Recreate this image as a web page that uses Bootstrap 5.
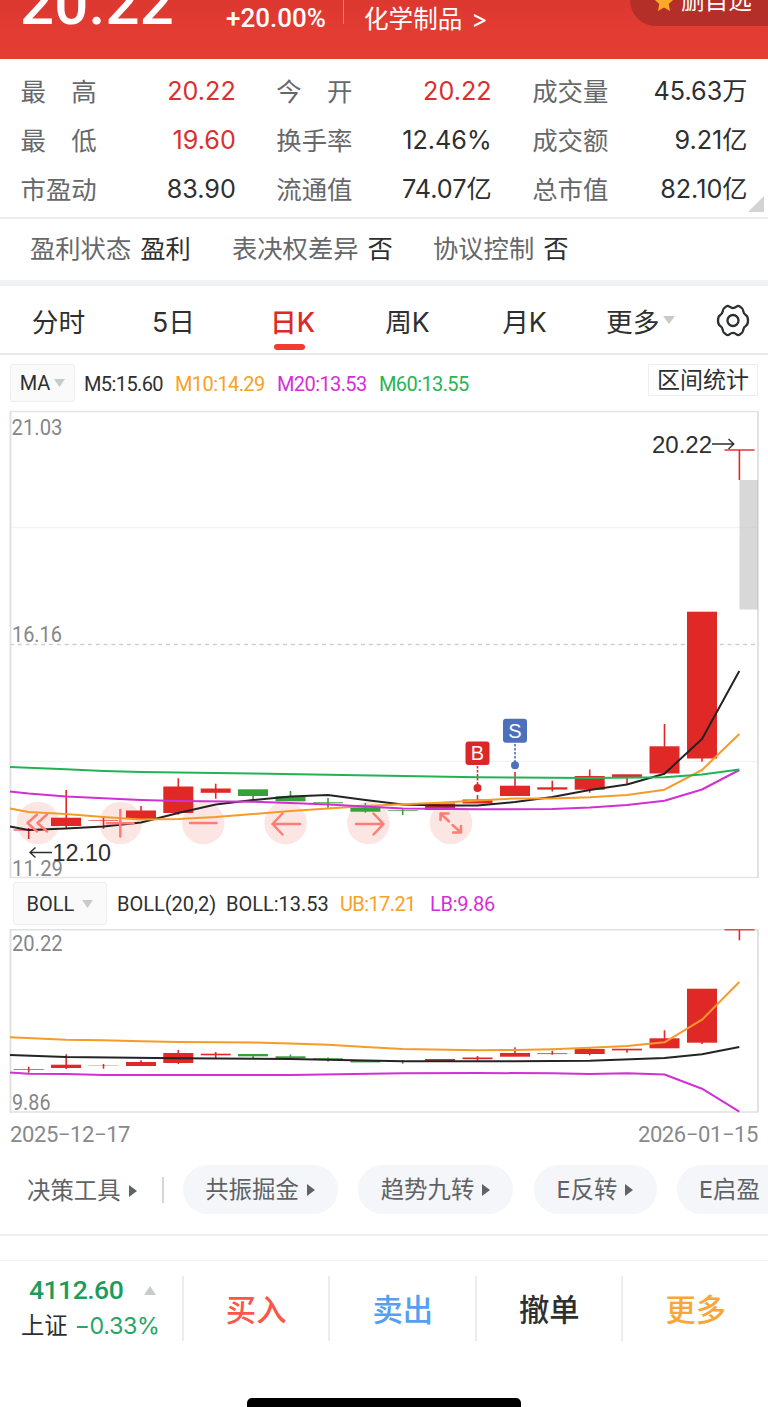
<!DOCTYPE html>
<html lang="zh-CN">
<head>
<meta charset="utf-8">
<meta name="viewport" content="width=device-width, initial-scale=1">
<title>日K 行情</title>
<link href="https://cdn.jsdelivr.net/npm/bootstrap@5.3.0/dist/css/bootstrap.min.css" rel="stylesheet">
<style>
body{width:768px;height:1407px;overflow:hidden;background:#fff;color:#2e2f30;font-family:Inter,"Noto Sans CJK SC",sans-serif;line-height:1}
.din{font-family:Roboto,"Noto Sans CJK SC",sans-serif}
.hero{height:59px;background:linear-gradient(#dc3830,#e33c33 60%,#e43e34);color:#fff}
.hero-price{margin:-26px 0 0 20px;width:206px;font-size:60px;font-weight:500;line-height:60px;letter-spacing:.2px}
.hero-pct{width:117px;font-size:26px;font-weight:500;line-height:37px}
.hero-rule{width:1px;height:24px;background:#ee7a72;margin-right:20px}
.hero-sector{font-size:24.6px;line-height:39px;word-spacing:2px;white-space:pre}
.fav{width:138px;height:52px;margin-top:-26px;border-radius:26px 0 0 26px;background:#b42f28;padding:17px 0 0 23px;font-size:23.6px}
.fav span{margin-top:-2px}
.stats{height:158px;padding:8px 20.5px 0;row-gap:0;column-gap:40.5px;display:grid;grid-template-columns:repeat(3,1fr);grid-auto-rows:49.2px;position:relative;font-size:25.2px}
.stat-name{color:#66686a;font-size:25.4px}
.up{color:#d9302f}
.corner{right:4px;bottom:5px}
.info{height:63px;border-top:2px solid #ececed;padding:0 0 2px 30px;font-size:25.3px;color:#66686a}
.info b{font-weight:400;color:#2e2f30;margin-left:9px}
.band{height:6px;background:#f1f2f5}
.tabs{height:69px;border-bottom:2px solid #e9eaeb;font-size:26.700px}
.tab{width:117px;position:relative;padding-top:5px}
.tab.on{color:#dc2a28;font-weight:500}
.tab.on::after{content:"";position:absolute;left:39.5px;bottom:3px;width:31px;height:6px;border-radius:3px;background:#f13d30}
.legend{height:50px;font-size:20px}
.tight{letter-spacing:-.6px}
.pick{background:#fafafa;border:1px solid #eee;border-radius:3px}
.range{width:110px;height:32px;border:1.5px solid #eee;font-size:23px}
.plot{display:block}
.dates{height:41px;font-size:22px;letter-spacing:-.4px;color:#87898b;padding:0 10px}
.tools{height:81px;padding-top:1px;border-bottom:2px solid #f0f0f1;font-size:23.4px;color:#606365}
.pill{height:49px;border-radius:25px;background:#f4f6fa;flex:none}
.tools-rule{width:1.5px;height:26px;background:#d5d6d7}
.gap-line{height:25px;border-bottom:1.5px solid #f1f1f2}
.bar{height:137px;padding-top:15px}
.idx{width:182px;height:65px}
.act{height:65px;width:146.6px;border-left:2px solid #ececec;font-size:30.3px;font-weight:500;padding-top:3px}
.home{width:274px;height:14px;border-radius:5px;background:#000;margin-left:247px}
</style>
</head>
<body>
<header class="hero d-flex align-items-start overflow-hidden">
  <div class="hero-price din">20.22</div>
  <div class="hero-pct din">+20.00%</div>
  <div class="hero-rule"></div>
  <div class="hero-sector">化学制品 &gt;</div>
  <div class="fav ms-auto d-flex text-nowrap">
    <svg width="22" height="22" viewBox="0 0 22 22" class="flex-shrink-0" style="margin-right:6px"><path d="M11 1l2.9 6.500 7 .8-5.200 4.700 1.400 7L11 16.500 4.900 20l1.400-7L1.100 8.300l7-.8z" fill="#fba928"/></svg><span>删自选</span>
  </div>
</header>

<section class="stats">
  <div class="d-flex justify-content-between align-items-center"><span class="stat-name">最　高</span><span class="up">20.22</span></div>
  <div class="d-flex justify-content-between align-items-center"><span class="stat-name">今　开</span><span class="up">20.22</span></div>
  <div class="d-flex justify-content-between align-items-center"><span class="stat-name">成交量</span><span>45.63万</span></div>
  <div class="d-flex justify-content-between align-items-center"><span class="stat-name">最　低</span><span class="up">19.60</span></div>
  <div class="d-flex justify-content-between align-items-center"><span class="stat-name">换手率</span><span>12.46%</span></div>
  <div class="d-flex justify-content-between align-items-center"><span class="stat-name">成交额</span><span>9.21亿</span></div>
  <div class="d-flex justify-content-between align-items-center"><span class="stat-name">市盈动</span><span>83.90</span></div>
  <div class="d-flex justify-content-between align-items-center"><span class="stat-name">流通值</span><span>74.07亿</span></div>
  <div class="d-flex justify-content-between align-items-center"><span class="stat-name">总市值</span><span>82.10亿</span></div>
  <svg class="corner position-absolute" width="16" height="16"><path d="M16 0V16H0z" fill="#d3d3d3"/></svg>
</section>

<section class="info d-flex align-items-center">
  <span style="width:202px">盈利状态<b>盈利</b></span>
  <span style="width:201px">表决权差异<b>否</b></span>
  <span>协议控制<b>否</b></span>
</section>
<div class="band"></div>

<nav class="tabs d-flex">
  <div class="tab d-flex align-items-center justify-content-center">分时</div>
  <div class="tab d-flex align-items-center justify-content-center pe-1">5日</div>
  <div class="tab on d-flex align-items-center justify-content-center">日K</div>
  <div class="tab d-flex align-items-center justify-content-center pe-1">周K</div>
  <div class="tab d-flex align-items-center justify-content-center pe-1">月K</div>
  <div class="d-flex align-items-center" style="margin-left:21px;padding-top:5px">更多<svg class="ms-1" width="12" height="8" style="margin-top:-4px"><path d="M0 0h12L6 8z" fill="#c9caca"/></svg></div>
  <svg class="ms-auto me-3 mt-3" width="38" height="38" viewBox="0 0 38 38" fill="none" stroke="#2e2f30" stroke-width="2.300" stroke-linejoin="round"><path d="M11.900 4.700C13.500 3.400 14.500 3.700 15.500 4.700C17.500 6.300 20.500 6.300 22.500 4.700C23.500 3.700 24.500 3.400 26.100 4.700C29 6.500 29 7 29.200 9C29.600 11.300 30.500 12.500 32 13.200C33.500 14.200 34 15 34 18.500C34 22 33.500 22.800 32 23.800C30.500 24.500 29.600 25.700 29.200 28C29 30 29 30.500 26.100 32.300C24.500 33.600 23.500 33.300 22.500 32.300C20.500 30.700 17.500 30.700 15.500 32.300C14.500 33.300 13.500 33.600 11.900 32.300C9 30.500 9 30 8.800 28C8.400 25.700 7.500 24.500 6 23.800C4.500 22.800 4 22 4 18.500C4 15 4.500 14.200 6 13.200C7.500 12.500 8.400 11.300 8.800 9C9 7 9 6.500 11.900 4.700Z"/><circle cx="19" cy="18.500" r="5.500"/></svg>
</nav>

<div class="legend din d-flex align-items-start">
  <div class="pick d-flex align-items-center justify-content-center" style="width:65px;height:38px;margin:9px 9px 0 10px">MA<svg class="ms-1" width="11" height="8"><path d="M0 0h11L5.500 8z" fill="#c9caca"/></svg></div>
  <div class="tight d-flex align-items-center" style="height:58px">
    <span style="width:91px">M5:15.60</span>
    <span style="width:102px;color:#f7a125">M10:14.29</span>
    <span style="width:102px;color:#d52fd8">M20:13.53</span>
    <span style="color:#27b455">M60:13.55</span>
  </div>
  <div class="range d-flex align-items-center justify-content-center ms-auto" style="margin:9px 10px 0 0">区间统计</div>
</div>

<svg class="plot" width="768" height="474" viewBox="0 405 768 474">
  <g fill="none">
    <path d="M10 527.500H758M10 761.500H758" stroke="#f3f3f4" stroke-width="1.500"/>
    <path d="M10 644.500H758" stroke="#cfcfcf" stroke-width="1.500" stroke-dasharray="4 3.800"/>
    <path d="M10 411.500H758M10 877.500H758" stroke="#e3e4e5" stroke-width="1.300"/>
    <path d="M10.500 411V878M758 411V878" stroke="#dedfe0" stroke-width="1.800"/>
  </g>
  <rect x="739.500" y="480" width="18.500" height="129.500" fill="#bbb" fill-opacity=".57"/>
  <g fill="#fbe6e4"><circle cx="38" cy="823" r="21.300"/><circle cx="120.500" cy="823" r="21.300"/><circle cx="203.300" cy="823" r="21.300"/><circle cx="285.600" cy="823" r="21.300"/><circle cx="368.400" cy="823" r="21.300"/><circle cx="451" cy="823" r="21.300"/></g>
  <g fill="#e02827">
    <rect x="13.600" y="829.500" width="30" height="1"/><rect x="27.900" y="828" width="1.600" height="11"/>
    <rect x="51" y="817.700" width="30" height="8.300"/><rect x="65.400" y="790" width="1.600" height="38.700"/>
    <rect x="88.500" y="820" width="30" height=".6"/><rect x="102.700" y="816.500" width="1.600" height="12.300"/>
    <rect x="126" y="810.500" width="30" height="8.500"/><rect x="140.200" y="806" width="1.600" height="6"/>
    <rect x="163.300" y="786.500" width="30" height="26.500"/><rect x="177.500" y="778.300" width="1.600" height="36.300"/>
    <rect x="200.700" y="788.500" width="30" height="4.300"/><rect x="214.900" y="783.700" width="1.600" height="15"/>
    <rect x="425" y="803.500" width="30" height="6.500"/>
    <rect x="462.500" y="799.500" width="30" height="4"/><rect x="476.700" y="795" width="1.600" height="6"/>
    <rect x="500" y="785.700" width="30" height="10.300"/><rect x="514.200" y="772" width="1.600" height="14"/>
    <rect x="537.300" y="787.300" width="30" height="2.300"/><rect x="551.500" y="780.700" width="1.600" height="10.800"/>
    <rect x="574.700" y="776" width="30" height="13.700"/><rect x="588.900" y="769.500" width="1.600" height="23.200"/>
    <rect x="612" y="774.300" width="30" height="3.700"/><rect x="626.200" y="777" width="1.600" height="7"/>
    <rect x="649.500" y="746.300" width="30" height="27.200"/><rect x="663.700" y="724" width="1.600" height="23"/>
    <rect x="687" y="611.700" width="30" height="146.800"/><rect x="701.200" y="758" width="1.600" height="3.700"/>
    <rect x="724.500" y="449.300" width="30" height="1.400"/><rect x="738.600" y="450" width="1.600" height="30"/>
  </g>
  <g fill="#36a137">
    <rect x="238" y="789.300" width="30" height="6.700"/><rect x="252.300" y="795" width="1.600" height="4"/>
    <rect x="275.500" y="796.300" width="30" height="5"/><rect x="289.700" y="791" width="1.600" height="6"/>
    <rect x="313" y="802.300" width="30" height="1"/><rect x="327.200" y="798" width="1.600" height="10"/>
    <rect x="350.400" y="807.300" width="30" height="4.400"/><rect x="364.600" y="803" width="1.600" height="9.700"/>
    <rect x="387.700" y="810.200" width="30" height=".7"/><rect x="401.900" y="808" width="1.600" height="7"/>
  </g>
  <g fill="none" stroke-width="2" stroke-linejoin="round">
    <path stroke="#242424" d="M10 826.500L28.600 830 66 828.500 103.500 826.500 141 822.500 178.300 813 215.700 804.500 253 800 290.500 796.500 328 795 365.400 800 402.700 804.600 440 805.500 477.500 805.500 515 802 552.300 797 589.700 790 627 784.500 664.500 773.700 702 739 739.300 671"/>
    <path stroke="#f59b28" d="M10 808.500L28.600 812 66 814 103.500 817 141 819.500 178.300 819 215.700 817 253 814 290.500 811 328 808.500 365.400 806 402.700 804.300 440 802.700 477.500 800.500 515 798.500 552.300 798.500 589.700 797.300 627 795 664.500 789.700 702 770 739.300 734"/>
    <path stroke="#d030d4" d="M10 791.500L28.600 793.500 66 796.500 141 800 178.300 801 253 801.700 290.500 803 328 804.500 365.400 806.500 402.700 808.500 477.500 809.300 552.300 809 589.700 807.500 627 805 664.500 800.700 702 789.500 739.300 770"/>
    <path stroke="#22b355" d="M10 767L66 769.300 103.500 771 141 772 178.300 772.600 253 773.500 328 774.700 402.700 776 477.500 777.200 515 777.500 589.700 778 664.500 777.300 702 774.500 739.300 769.500"/>
  </g>
  <g fill="none" stroke="#ff7d74" stroke-width="2.500" stroke-linecap="round" stroke-linejoin="round">
    <path d="M37 814.500L27.500 823 37 831.500M47 814.500L37.500 823 47 831.500"/>
    <path d="M107 823.300H133.500M120.300 810V836.500"/><path d="M190 823H216.500"/>
    <path d="M300 824H272.500M282.500 813.500L272.500 824 282.500 834.500"/>
    <path d="M356 824H383.500M373.500 813.500L383.500 824 373.500 834.500"/>
    <path d="M449 821.500L440.500 813.500M440.500 820V813.500H448.500M452.500 825L461 832.500M461 826V832.500H453"/>
  </g>
  <g font-family="Roboto, sans-serif" font-size="22" fill="#85878a">
    <text x="11.500" y="435" textLength="51" lengthAdjust="spacingAndGlyphs">21.03</text>
    <text x="12" y="642" textLength="50" lengthAdjust="spacingAndGlyphs">16.16</text>
    <text x="12" y="875.500" textLength="51" lengthAdjust="spacingAndGlyphs">11.29</text>
  </g>
  <g font-family="Liberation Sans, sans-serif" font-size="23.500" fill="#2e2f30">
    <text x="652" y="452.500" textLength="60" lengthAdjust="spacingAndGlyphs">20.22</text>
    <text x="52.500" y="861" textLength="58.500" lengthAdjust="spacingAndGlyphs">12.10</text>
  </g>
  <g fill="none" stroke="#2e2f30" stroke-width="1.400"><path d="M712 444H733.500M728.500 439L733.800 444 728.500 449"/><path d="M52 852.500H30.500M35.500 847.500L30 852.500 35.500 857.500"/></g>
  <g font-family="Liberation Sans, sans-serif" font-size="20" fill="#fff" text-anchor="middle">
    <rect x="465.500" y="741.500" width="24" height="23.500" rx="3" fill="#dc2728"/><text x="477.500" y="760.300">B</text>
    <rect x="503" y="718.700" width="24" height="24" rx="3" fill="#4c70bb"/><text x="515" y="737.500">S</text>
  </g>
  <path d="M477.500 766V784" stroke="#c93232" stroke-width="1.600" stroke-dasharray="2.500 1.500"/><circle cx="477.500" cy="788" r="4" fill="#dc2728"/>
  <path d="M515 744V762" stroke="#4c70bb" stroke-width="1.600" stroke-dasharray="2.500 1.500"/><circle cx="515" cy="765.200" r="4" fill="#4c70bb"/>
</svg>

<div class="legend din d-flex align-items-start">
  <div class="pick d-flex align-items-center justify-content-center" style="width:94px;height:43px;margin:3px 10px 0 13px">BOLL<svg class="ms-2" width="11" height="8"><path d="M0 0h11L5.500 8z" fill="#c9caca"/></svg></div>
  <div class="d-flex align-items-center" style="height:50px">
    <span style="width:109px">BOLL(20,2)</span>
    <span style="width:114px">BOLL:13.53</span>
    <span class="tight" style="width:90px;color:#f7a125">UB:17.21</span>
    <span style="color:#d52fd8;letter-spacing:-.3px">LB:9.86</span>
  </div>
</div>

<svg class="plot" width="768" height="185" viewBox="0 929 768 185">
  <g fill="none">
    <path d="M10 929.700H758M10 1112H758" stroke="#e0e1e2" stroke-width="1.400"/>
    <path d="M10.500 929V1112.500M758 929V1112.500" stroke="#dedfe0" stroke-width="1.800"/>
  </g>
  <g fill="#e02827">
    <rect x="13.600" y="1069" width="30" height=".7"/><rect x="27.900" y="1066.700" width="1.600" height="6"/>
    <rect x="51" y="1064.700" width="30" height="3.300"/><rect x="65.400" y="1054.300" width="1.600" height="14.700"/>
    <rect x="88.500" y="1065.500" width="30" height=".3"/><rect x="102.700" y="1064" width="1.600" height="4.700"/>
    <rect x="126" y="1062" width="30" height="4"/><rect x="140.200" y="1060.300" width="1.600" height="3"/>
    <rect x="163.300" y="1053" width="30" height="10"/><rect x="177.500" y="1050" width="1.600" height="14"/>
    <rect x="200.700" y="1053.700" width="30" height="1.600"/><rect x="214.900" y="1052" width="1.600" height="6"/>
    <rect x="425" y="1059" width="30" height="2"/>
    <rect x="462.500" y="1057.500" width="30" height="1.700"/><rect x="476.700" y="1056" width="1.600" height="6"/>
    <rect x="500" y="1053" width="30" height="3.700"/><rect x="514.200" y="1047.300" width="1.600" height="7"/>
    <rect x="537.300" y="1053.300" width="30" height=".8"/><rect x="551.500" y="1050.700" width="1.600" height="4"/>
    <rect x="574.700" y="1049" width="30" height="5"/><rect x="588.900" y="1048" width="1.600" height="7.300"/>
    <rect x="612" y="1048.700" width="30" height="1.700"/><rect x="626.200" y="1049" width="1.600" height="3.700"/>
    <rect x="649.500" y="1038.300" width="30" height="10"/><rect x="663.700" y="1030.300" width="1.600" height="9"/>
    <rect x="687" y="988.700" width="30" height="54"/><rect x="701.200" y="1042" width="1.600" height="2"/>
    <rect x="724.500" y="929.200" width="30" height="1.200"/><rect x="738.600" y="930" width="1.600" height="10.300"/>
  </g>
  <g fill="#36a137">
    <rect x="238" y="1054" width="30" height="2.300"/><rect x="252.300" y="1055" width="1.600" height="3"/>
    <rect x="275.500" y="1056.300" width="30" height="2"/><rect x="289.700" y="1054.500" width="1.600" height="3"/>
    <rect x="313" y="1058.300" width="30" height=".7"/><rect x="327.200" y="1057.500" width="1.600" height="4"/>
    <rect x="350.400" y="1060.700" width="30" height="1.700"/><rect x="401.900" y="1060" width="1.600" height="3.700"/>
  </g>
  <g fill="none" stroke-width="2" stroke-linejoin="round">
    <path stroke="#f59b28" d="M10 1037.300L66 1039.700 103.500 1040.200 141 1041.200 178.300 1042 253 1042.600 290.500 1043.500 328 1044.700 365.400 1047 402.700 1049 477.500 1050.300 515 1050 552.300 1049.300 589.700 1047.800 627 1046 664.500 1042.300 702 1019.700 739.300 982"/>
    <path stroke="#242424" d="M10 1055L66 1057 178.300 1058.300 290.500 1059 365.400 1060.500 402.700 1061.300 515 1061.300 589.700 1060.700 664.500 1058 702 1054.300 739.300 1047"/>
    <path stroke="#d030d4" d="M10 1072.500L28.600 1073.700 66 1074 103.500 1075 290.500 1075 402.700 1073.300 477.500 1073 552.300 1073.300 589.700 1074 627 1073.300 664.500 1074.500 702 1088.700 739.300 1111.700"/>
  </g>
  <g font-family="Roboto, sans-serif" font-size="22" fill="#85878a">
    <text x="12" y="950.500" textLength="50.500" lengthAdjust="spacingAndGlyphs">20.22</text>
    <text x="12" y="1109.500" textLength="38.500" lengthAdjust="spacingAndGlyphs">9.86</text>
  </g>
</svg>

<div class="dates din d-flex justify-content-between align-items-center"><span>2025−12−17</span><span>2026−01−15</span></div>

<section class="tools d-flex overflow-hidden text-nowrap">
  <div class="d-flex align-items-center flex-shrink-0" style="width:162px;height:69px;padding-left:27px">决策工具<svg class="ms-2" width="8" height="12"><path d="M0 0L8 6 0 12z" fill="#606365"/></svg></div>
  <div class="tools-rule flex-shrink-0" style="margin:21px 19px 0 0"></div>
  <div class="d-flex flex-shrink-0" style="gap:20.500px;padding-top:9px">
    <div class="pill d-flex align-items-center justify-content-center" style="width:155px">共振掘金<svg class="ms-2" width="8" height="12"><path d="M0 0L8 6 0 12z" fill="#606365"/></svg></div>
    <div class="pill d-flex align-items-center justify-content-center" style="width:155px">趋势九转<svg class="ms-2" width="8" height="12"><path d="M0 0L8 6 0 12z" fill="#606365"/></svg></div>
    <div class="pill d-flex align-items-center justify-content-center" style="width:123px">E反转<svg class="ms-2" width="8" height="12"><path d="M0 0L8 6 0 12z" fill="#606365"/></svg></div>
    <div class="pill d-flex align-items-center" style="width:123px;padding-left:22px">E启盈</div>
  </div>
</section>
<div class="gap-line"></div>

<footer class="bar d-flex">
  <div class="idx">
    <div class="d-flex align-items-center" style="color:#1c9c5b;padding:0 26px 0 29px;height:28px"><span class="din" style="font-size:26.500px;font-weight:500;letter-spacing:-.5px">4112.60</span><svg class="ms-auto" width="12" height="9"><path d="M0 9h12L6 0z" fill="#c9caca"/></svg></div>
    <div class="d-flex align-items-center" style="padding-left:21px;height:44px;font-size:23.300px">上证<span style="color:#2aa468;margin-left:7px;letter-spacing:-.4px">−0.33%</span></div>
  </div>
  <div class="act d-flex align-items-center justify-content-center" style="color:#f9574a">买入</div>
  <div class="act d-flex align-items-center justify-content-center" style="color:#559ff0">卖出</div>
  <div class="act d-flex align-items-center justify-content-center">撤单</div>
  <div class="act d-flex align-items-center justify-content-center" style="color:#faa637">更多</div>
</footer>
<div class="home"></div>
<script src="https://cdn.jsdelivr.net/npm/bootstrap@5.3.0/dist/js/bootstrap.bundle.min.js"></script>
</body>
</html>
